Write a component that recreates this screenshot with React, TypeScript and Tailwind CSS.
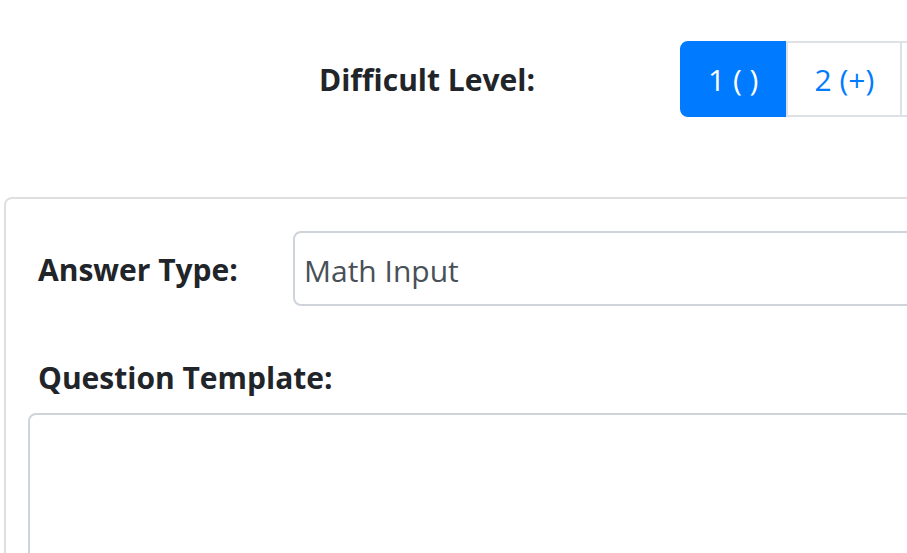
export default function App() {
  return (
    <div className="w-[907px] h-[553px] overflow-hidden bg-white text-[#212529] font-['Open_Sans',sans-serif]">
      {/* Difficulty selector */}
      <div className="flex items-center pt-[41px]">
        <div className="w-[535px] shrink-0 text-right text-[30px] font-bold leading-none pt-[2px]">Difficult Level:</div>
        <div className="ml-[145px] flex shrink-0 h-[76px]">
          <button className="px-[26px] bg-[#007bff] text-white text-[30px] rounded-l-[8px] border-2 border-[#007bff]">1 ( )</button>
          <button className="px-[26px] bg-white text-[#007bff] text-[30px] border-2 border-[#dee2e6]">2 (+)</button>
          <button className="px-[26px] bg-white text-[#007bff] text-[30px] border-2 border-l-0 border-[#dee2e6] whitespace-nowrap">3 (++)</button>
        </div>
      </div>

      {/* Question card */}
      <div className="mt-[80px] ml-[4px] w-[1200px] border-2 border-[#dfdfdf] rounded-[8px] pt-[32px] pl-[22px]">
        <div className="flex items-center">
          <label className="w-[265px] shrink-0 pl-[10px] pt-[3px] text-[30px] font-bold leading-none">Answer Type:</label>
          <div className="flex-1 h-[75px] border-2 border-[#ced4da] rounded-[8px] flex items-center pl-[9px] pt-[3px] text-[30px] text-[#495057]">
            Math Input
          </div>
        </div>
        <div className="mt-[57px] pl-[10px] text-[30px] font-bold leading-none">Question Template:</div>
        <textarea className="block mt-[20px] w-full h-[200px] border-2 border-[#ced4da] rounded-[8px] resize-none outline-none" />
      </div>
    </div>
  )
}
